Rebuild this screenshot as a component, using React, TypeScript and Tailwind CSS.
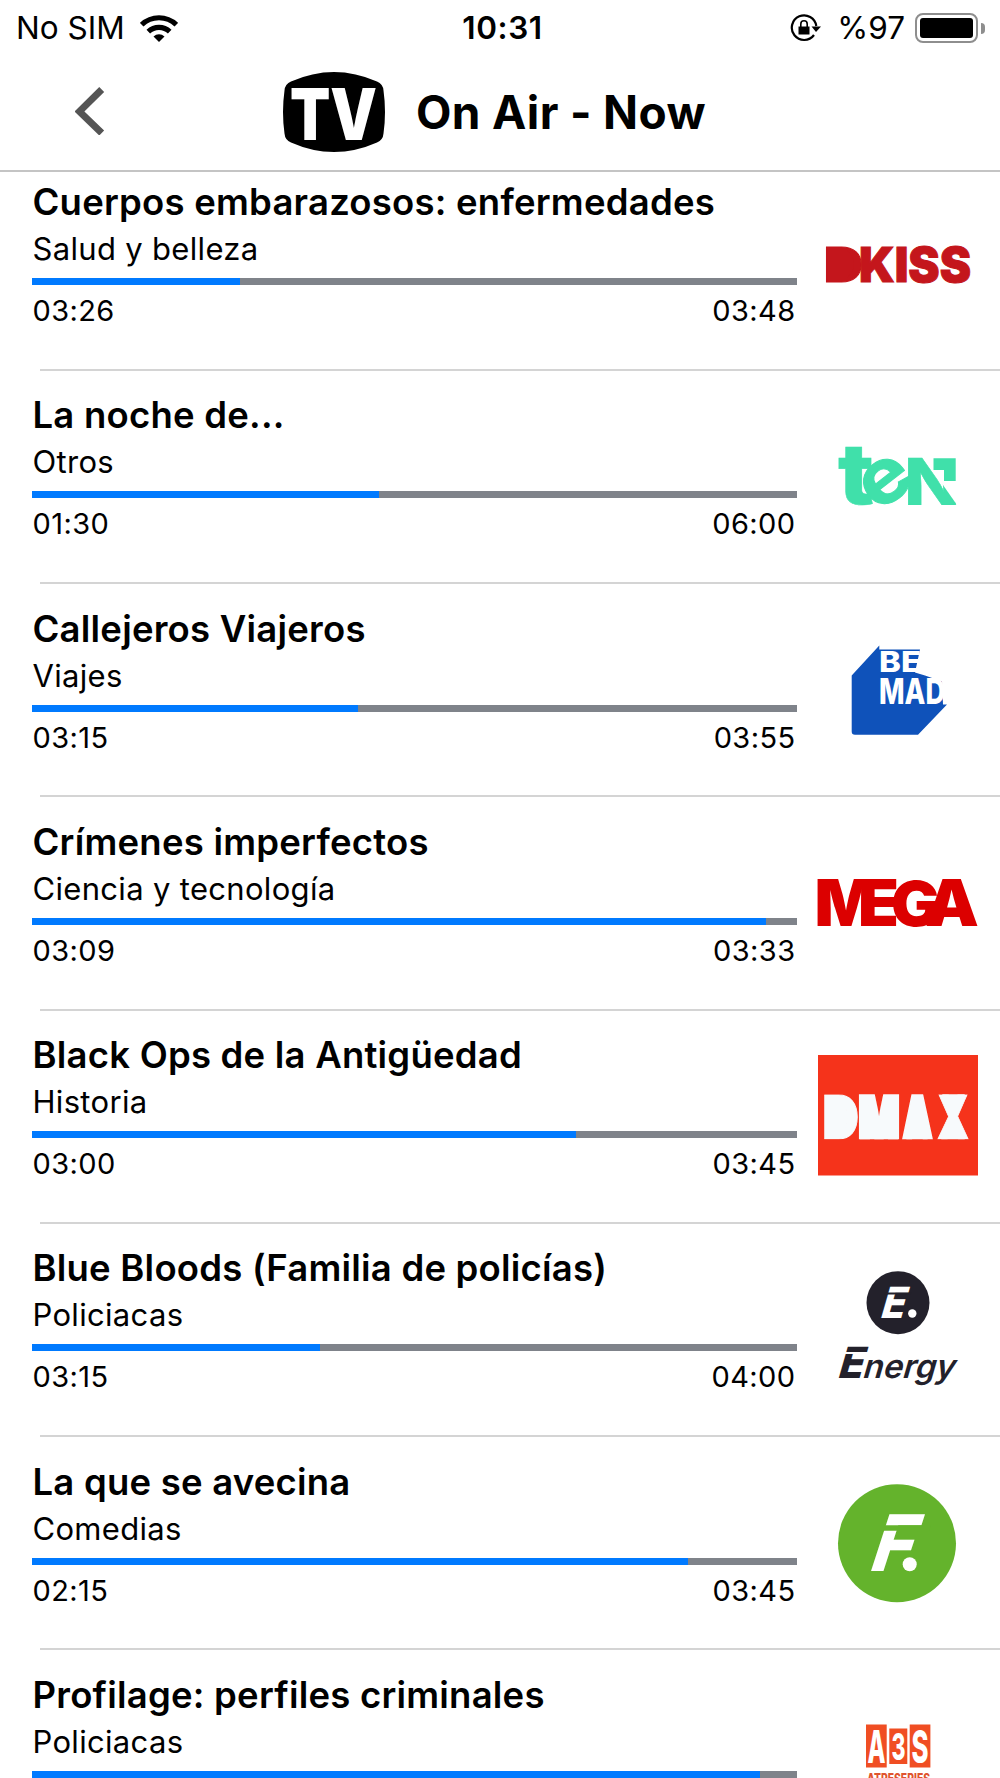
import React from 'react'

const DKiss = () => (
  <g fill="#c4161c" stroke="#c4161c" fontWeight={900} fontSize={48}>
    <text x={6} y={79.500} textLength={39} lengthAdjust="spacingAndGlyphs" strokeWidth={1}>D</text>
    <path d="M12 48h17q14 14 0 28H12z" stroke="none" />
    <text x={41} y={79.500} textLength={112} lengthAdjust="spacingAndGlyphs" strokeWidth={1}>KISS</text>
  </g>
)

const Ten = () => (
  <g fill="#40e0aa" stroke="#40e0aa" fontWeight={800}>
    <clipPath id="ten-n"><path d="M90 40h14l35 50H90z" /></clipPath>
    <text x={20} y={88.500} fontSize={84} textLength={36} lengthAdjust="spacingAndGlyphs" strokeWidth={0.500}>t</text>
    <text x={-25} y={20} fontSize={76} fontWeight={700} textLength={50} lengthAdjust="spacingAndGlyphs" transform="translate(68 67) rotate(-38)" strokeWidth={1}>e</text>
    <g clipPath="url(#ten-n)">
      <text x={86} y={90} fontSize={64} textLength={56} lengthAdjust="spacingAndGlyphs" strokeWidth={0.500}>N</text>
    </g>
    <path d="M115.500 43.300h22.200v22.700h-11.700v-11h-10.500z" stroke="none" />
  </g>
)

const BeMad = () => (
  <g fontWeight={800} fill="#fff">
    <path fill="#0f52ba" d="M61.300 16.500V20.500H102l-5 23 10 3 17 6 1 23h4L100 105.800H37q-3.300 0-3.300-3.300V46.500z" />
    <text x={61} y={42.500} fontSize={29} textLength={42} lengthAdjust="spacingAndGlyphs">BE</text>
    <text x={61} y={74.500} fontSize={35} textLength={66} lengthAdjust="spacingAndGlyphs">MAD</text>
  </g>
)

const Mega = () => (
  <g fontSize={64.500} fontWeight={900} fill="#dc0000">
    <text x={-3.500} y={84.300} textLength={63} lengthAdjust="spacingAndGlyphs">M</text>
    <text x={40} y={84.300} textLength={41} lengthAdjust="spacingAndGlyphs">E</text>
    <text x={73} y={83.700} fontSize={62.500} textLength={49} lengthAdjust="spacingAndGlyphs">G</text>
    <text x={107} y={84.300} textLength={54} lengthAdjust="spacingAndGlyphs">A</text>
  </g>
)

const Dmax = () => (
  <>
    <path fill="#f5331b" d="M0 0h160v120.500H0z" />
    <clipPath id="dmax-band"><path d="M6.300 39.300h146v45h-146z" /></clipPath>
    <g fill="#f7fafc" stroke="#f7fafc" fontWeight={900} fontSize={60} clipPath="url(#dmax-band)">
      <text x={4} y={83.500} textLength={37} lengthAdjust="spacingAndGlyphs" strokeWidth={1}>D</text>
      <path d="M12 44h10q16 18 0 36H12z" stroke="none" />
      <text x={40} y={83.500} textLength={42} lengthAdjust="spacingAndGlyphs" strokeWidth={3}>M</text>
      <path d="M42 62h38v23H42z" stroke="none" />
      <text x={84} y={83.500} textLength={31} lengthAdjust="spacingAndGlyphs" strokeWidth={2}>A</text>
      <path d="M99 46l11 40H88z" stroke="none" />
      <text x={119} y={83.500} textLength={32} lengthAdjust="spacingAndGlyphs" strokeWidth={1}>X</text>
      <path d="M124 39h23L135 60zM135 63l12 22h-24z" stroke="none" />
    </g>
  </>
)

const Energy = () => (
  <g fill="#23212b">
    <circle cx={80} cy={34.700} r={31.500} />
    <g transform="translate(61 50) skewX(-16)">
      <text fontSize={43} fontWeight={800} fill="#fff" textLength={24} lengthAdjust="spacingAndGlyphs">E</text>
      <path d="M-1-25.500h26v2H-1z" />
    </g>
    <circle cx={94.300} cy={45.500} r={4.200} fill="#fff" />
    <g transform="translate(18.500 109.500) skewX(-16)">
      <text fontSize={43} fontWeight={800} textLength={25} lengthAdjust="spacingAndGlyphs">E</text>
      <text x={25} fontSize={33} fontWeight={600} textLength={92} lengthAdjust="spacingAndGlyphs">nergy</text>
      <path d="M-1-25.500h26v2H-1z" fill="#fff" />
    </g>
  </g>
)

const Fdf = () => (
  <>
    <circle cx={79} cy={61.200} r={59} fill="#64b32c" />
    <g transform="translate(49 89.200) skewX(-18)">
      <text fontSize={78} fontWeight={800} fill="#fff" textLength={42} lengthAdjust="spacingAndGlyphs">F</text>
      <path d="M-1-46h50v5.500H-1z" fill="#64b32c" />
    </g>
    <circle cx={91.700} cy={82.200} r={7} fill="#fff" />
  </>
)

const A3s = () => (
  <g fontWeight={800} fill="#fff">
    <path fill="#f04e23" d="M48 29.500h20.700v43H48zM71.300 33.500h18v35.600h-18zM91.700 29.500h20.700v43H91.700z" />
    <text x={49.500} y={67.500} fontSize={45} textLength={18} lengthAdjust="spacingAndGlyphs">A</text>
    <text x={73.500} y={65} fontSize={37} textLength={14} lengthAdjust="spacingAndGlyphs">3</text>
    <text x={93.500} y={67.500} fontSize={45} textLength={17} lengthAdjust="spacingAndGlyphs">S</text>
    <text x={49} y={89} fontSize={14} fill="#e0552f" textLength={63} lengthAdjust="spacingAndGlyphs">ATRESERIES</text>
  </g>
)

const programs = [
  { title: 'Cuerpos embarazosos: enfermedades', genre: 'Salud y belleza', start: '03:26', end: '03:48', progress: 27.2, Logo: DKiss },
  { title: 'La noche de...', genre: 'Otros', start: '01:30', end: '06:00', progress: 45.3, Logo: Ten },
  { title: 'Callejeros Viajeros', genre: 'Viajes', start: '03:15', end: '03:55', progress: 42.6, Logo: BeMad },
  { title: 'Crímenes imperfectos', genre: 'Ciencia y tecnología', start: '03:09', end: '03:33', progress: 95.9, Logo: Mega },
  { title: 'Black Ops de la Antigüedad', genre: 'Historia', start: '03:00', end: '03:45', progress: 71.1, Logo: Dmax },
  { title: 'Blue Bloods (Familia de policías)', genre: 'Policiacas', start: '03:15', end: '04:00', progress: 37.6, Logo: Energy },
  { title: 'La que se avecina', genre: 'Comedias', start: '02:15', end: '03:45', progress: 85.8, Logo: Fdf },
  { title: 'Profilage: perfiles criminales', genre: 'Policiacas', start: '', end: '', progress: 95.1, Logo: A3s },
]

const StatusBar = () => (
  <div className="grid h-14 grid-cols-3 items-center pl-4 pr-[15px] text-[31.5px] leading-none">
    <div className="flex items-center gap-[15px]">
      <span>No SIM</span>
      <svg className="h-[27px] w-[38px]" viewBox="0 0 38 27" fill="none" stroke="#000" strokeWidth={5.200}>
        <path d="M1.700 9.700a25 25 0 0 1 34.600 0M8.300 16.700a15.500 15.500 0 0 1 21.400 0" />
        <path d="M13.500 21.500a8 8 0 0 1 11 0L19 27z" fill="#000" stroke="none" />
      </svg>
    </div>
    <span className="pl-1 text-center font-semibold tracking-[0.6px]">10:31</span>
    <div className="flex items-center justify-end">
      <svg className="mr-[16px] -mt-px h-7 w-[31px]" viewBox="0 0 31 28" fill="none" stroke="#000" strokeWidth={2.200}>
        <path d="M24 21A12.300 12.300 0 1 1 26.300 12" />
        <path d="M21.500 12.500h9.500L26 18z" fill="#000" stroke="none" />
        <path d="M8.500 12.500h11v8h-11z" fill="#000" stroke="none" />
        <path d="M10.800 13V10a3.200 3.200 0 0 1 6.400 0v3" strokeWidth={1.600} />
      </svg>
      <span className="mr-[10px]">%97</span>
      <div className="h-[30px] w-[63px] rounded-[8px] border-2 border-[#8e8e8e] p-[3px]">
        <div className="h-full w-full rounded-[3px] bg-black" />
      </div>
      <div className="ml-[3px] h-[11px] w-[4px] rounded-r-full bg-[#8e8e8e]" />
    </div>
  </div>
)

const NavBar = () => (
  <div className="flex h-[112px] items-center pl-[75px]">
    <svg className="-mt-[3px] h-12 w-[30px]" viewBox="0 0 30 48" fill="none" stroke="#555" strokeWidth={7}>
      <path d="M26.700 2.600 4.400 24.500 26.700 46" />
    </svg>
    <svg className="ml-[177px] h-20 w-[104px]" viewBox="0 0 104 80">
      <path d="M9 9.500Q52-9.500 95 9.500q6 2.500 6.500 9 3 21.500 0 43-.5 6.500-6.500 9-43 19-86 0-6-2.500-6.500-9-3-21.500 0-43 .5-6.500 6.500-9z" />
      <text x={8} y={67.500} fontSize={71} fontWeight={900} fill="#fff" textLength={87} lengthAdjust="spacingAndGlyphs">TV</text>
    </svg>
    <h1 className="ml-[30px] whitespace-nowrap text-[46px] font-bold leading-[56px] tracking-[0.35px]">On Air - Now</h1>
  </div>
)

const App = () => {
  return (
    <div className="h-[1778px] w-[1000px] overflow-hidden bg-white font-['Inter',sans-serif] text-black">
      <header className="relative z-10 h-[172px] border-b-2 border-[#c4c4c4] bg-white">
        <StatusBar />
        <NavBar />
      </header>

      <main className="-mt-[14.5px]">
        {programs.map(({ title, genre, start, end, progress, Logo }) => (
          <section key={title} className="flex h-[213.25px] flex-col">
            <div className="flex flex-1 pl-8">
              <div className="w-[765px] pt-[22.5px]">
                <h2 className="whitespace-nowrap pl-[0.5px] text-[36.5px] font-semibold leading-[44px] tracking-[0.22px]">{title}</h2>
                <p className="mt-[6px] whitespace-nowrap pl-[0.5px] text-[31px] leading-[38px] tracking-[0.32px]">{genre}</p>
                <div className="mt-[10px] h-[7px] bg-[#7f838a]">
                  <div className="h-full bg-[#007aff]" style={{ width: `${progress}%` }} />
                </div>
                <div className="mt-[8px] flex justify-between pl-[0.5px] pr-[1.5px] text-[29px] leading-[36px] tracking-[0.4px]">
                  <span>{start}</span>
                  <span>{end}</span>
                </div>
              </div>
              <svg className="ml-[21px] mt-[44.5px] h-[121px] w-[160px] overflow-visible" viewBox="0 0 160 121">
                <Logo />
              </svg>
            </div>
            <div className="ml-10 h-[2px] bg-[#d4d4d4]" />
          </section>
        ))}
      </main>
    </div>
  )
}

export default App
